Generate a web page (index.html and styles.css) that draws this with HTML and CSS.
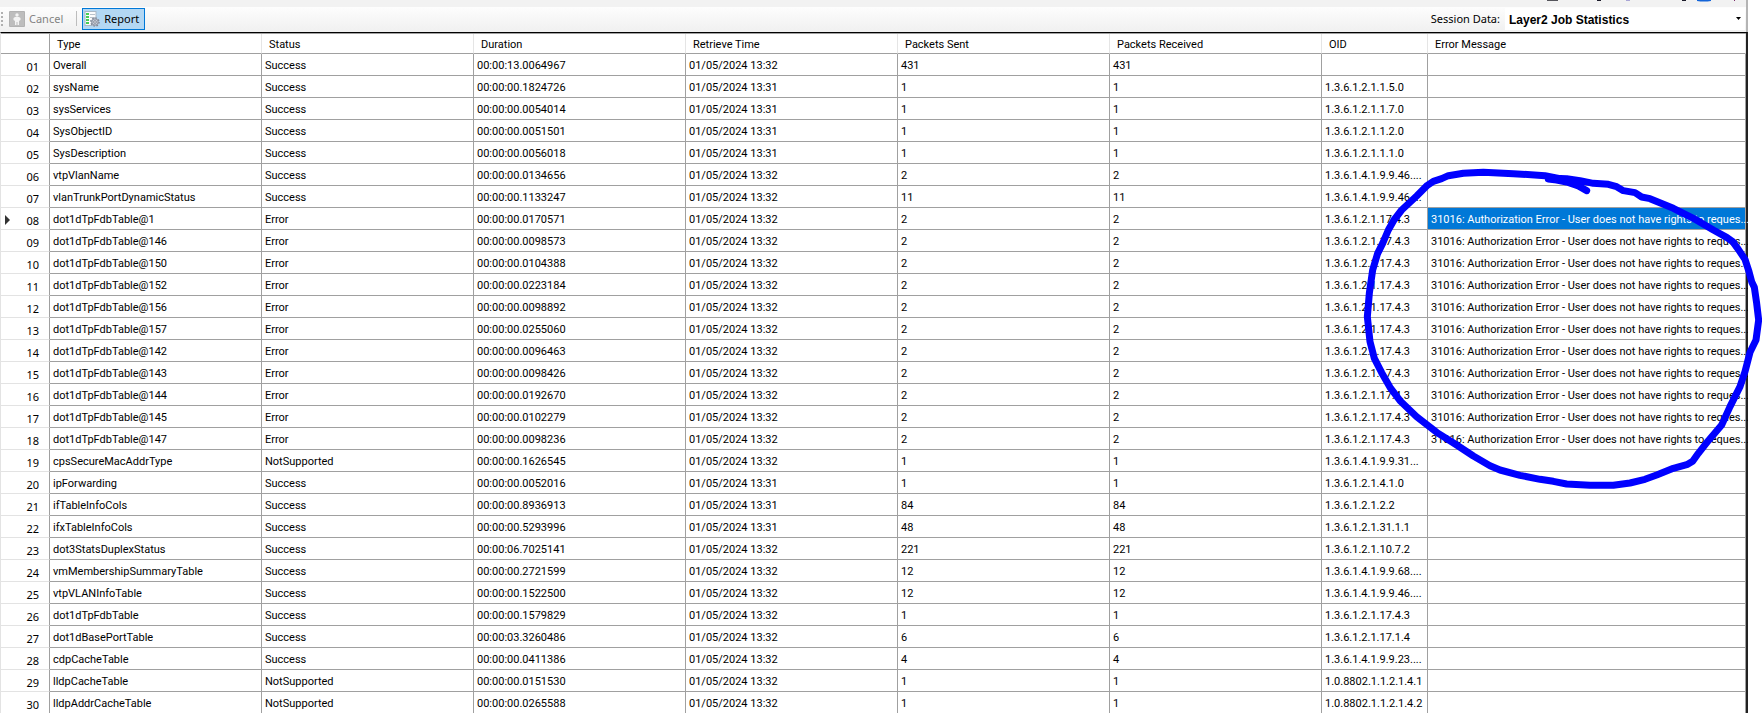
FILE: index.html
```
<!DOCTYPE html>
<html lang="en">
<head>
<meta charset="utf-8">
<title>Layer2 Job Statistics</title>
<link rel="stylesheet" href="styles.css">
</head>
<body>
<div class="window">
  <div class="menu-strip">
    <svg class="menu-icons" width="200" height="2" viewBox="0 0 200 2" aria-hidden="true">
      <path fill="#55555c" d="M1 0h11v1H1z"/>
      <path fill="#1b1b2a" d="M51 0h4v1h-4z"/>
      <path fill="#a9a5d6" d="M80 0h4v1h-4z"/>
      <path fill="#1b1b2a" d="M136 0h4v1h-4z"/>
      <path fill="#1464d8" d="M151 0h14v1q-7 1-14 0z"/>
      <path fill="#7a2a6a" d="M188 0h1v1h-1z"/>
    </svg>
  </div>
  <div class="toolbar">
    <span class="grip" aria-hidden="true"></span>
    <button class="tool" type="button" disabled>
      <svg width="16" height="16" viewBox="0 0 16 16" aria-hidden="true">
        <rect width="16" height="16" rx="1" fill="#b2b2b2"/>
        <rect x="1" y="1" width="14" height="14" fill="#bdbdbd"/>
        <circle cx="8" cy="4" r="1.7" fill="#f3f3f3"/>
        <path fill="#f3f3f3" d="M6 6h4l1.500 1v2l-1.500 1v4H8.500v-3h-1v3H6v-4L4.500 9V7z"/>
      </svg>
      <span>Cancel</span>
    </button>
    <span class="divider" aria-hidden="true"></span>
    <button class="tool active" type="button">
      <svg width="16" height="16" viewBox="0 0 16 16" aria-hidden="true">
        <rect x="1" y=".5" width="11" height="14" fill="#fbfcfd" stroke="#a9b8c6"/>
        <path fill="#46cf55" d="M2 2h3v2H2zM2 5h3v2H2zM2 8h3v2H2zM2 11h3v2H2z"/>
        <path fill="#b9c2cc" d="M6 3h5v1H6zM6 6h5v1H6zM6 9h2v1H6z"/>
        <circle cx="11" cy="11" r="4" fill="#c5cad3" stroke="#7f8796" stroke-width="1.500" stroke-dasharray="1.600 1.500"/>
        <circle cx="11" cy="11" r="3.200" fill="#c9ced8" stroke="#8b93a3"/>
        <circle cx="11" cy="11" r="1.300" fill="#fff" stroke="#7f8796"/>
      </svg>
      <span>Report</span>
    </button>
    <label class="session-label" for="session">Session Data:</label>
    <span class="combo">
      <select id="session"><option>Layer2 Job Statistics</option></select>
      <svg class="combo-arrow" width="5" height="3" viewBox="0 0 5 3" aria-hidden="true"><path d="M0 0h5L2.500 3z"/></svg>
    </span>
  </div>
  <div class="grid-frame">
    <table class="grid">
      <colgroup>
        <col class="c-num"><col class="c-std"><col class="c-std"><col class="c-std"><col class="c-std"><col class="c-std"><col class="c-std"><col class="c-oid"><col>
      </colgroup>
      <thead>
        <tr><td></td><th>Type</th><th>Status</th><th>Duration</th><th>Retrieve Time</th><th>Packets Sent</th><th>Packets Received</th><th>OID</th><th>Error Message</th></tr>
      </thead>
      <tbody id="rows"></tbody>
    </table>
  </div>
</div>
<svg class="ink" width="422" height="350" viewBox="0 0 1266 1050" aria-hidden="true">
  <path d="M740 122L715 108 680 96 650 90 625 87 M625 84L680 86 720 92 760 100 805 103 830 110 850 122 885 128 905 141 930 146 1000 175 1060 205 1120 240 1160 262 1178 275 1195 298 1215 328 1227 365 1235 395 1243 412 1250 460 1256 510 1248 570 1230 607 1215 665 1200 710 1170 770 1145 825 1105 872 1075 910 1058 934 1043 943 1000 955 950 975 915 988 870 999 820 1006 750 1006 680 1002 640 994 600 988 540 976 480 960 450 947 400 918 350 885 290 847 230 800 180 752 150 712 125 668 103 625 90 575 82 500 88 430 98 360 113 310 128 280 145 240 162 210 185 180 230 138 262 106 280 94 305 86 325 77 370 70 430 67 520 71 615 77 660 86"/>
</svg>
<script src="rows.js"></script>
</body>
</html>
```
FILE: styles.css
```
* { box-sizing: border-box; }

body {
  margin: 0;
  background: #fff;
  color: #000;
  font: 11px/14px Roboto, "Liberation Sans", sans-serif;
}

.window {
  display: flex;
  flex-direction: column;
  height: 100vh;
  margin-right: 14px;
  overflow: hidden;
}

.menu-strip {
  display: flex;
  flex: none;
  justify-content: flex-end;
  height: 7px;
  border-right: 2px solid #b4b4b4;
  background: #f2f2f2;
}

.menu-icons { flex: none; }

.toolbar {
  display: flex;
  flex: none;
  align-items: center;
  height: 25px;
  padding: 0 1px 2px;
  border-right: 2px solid #b4b4b4;
  background: linear-gradient(#fdfdfd, #f0f0f0);
  font-family: "Noto Sans", "Open Sans", sans-serif;
}

.grip {
  width: 2px;
  height: 14px;
  background: repeating-linear-gradient(#b0b0b0 0 2px, transparent 2px 4px);
}

.tool {
  display: flex;
  align-items: center;
  gap: 4px;
  height: 22px;
  margin-left: 5px;
  padding: 0 4px 0 0;
  border: 1px solid transparent;
  background: none;
  color: #000;
  font: inherit;
}

.tool:disabled { color: #838383; }

.tool.active {
  padding: 0 5px 0 1px;
  border-color: #0078d7;
  background: #b3d7f3;
}

.divider {
  width: 1px;
  height: 15px;
  margin-left: 8px;
  background: #bdbdbd;
}

.session-label { margin-left: auto; }

.combo {
  display: grid;
  align-items: center;
  width: 240px;
  height: 22px;
  margin-left: 5px;
  background: #fff;
}

.combo select {
  grid-area: 1 / 1;
  height: 22px;
  padding: 2px 16px 0 4px;
  border: 0;
  appearance: none;
  background: none;
  color: #000;
  font: bold 12px "Liberation Sans", Arial, sans-serif;
}

.combo-arrow {
  grid-area: 1 / 1;
  justify-self: end;
  margin-right: 4px;
  pointer-events: none;
}

.grid-frame {
  flex: 1;
  min-height: 0;
  border: 1px solid #e3e3e3;
  border-top: 1px solid #000;
  border-right: 2px solid #222;
  border-bottom: 0;
}

.grid {
  width: 100%;
  table-layout: fixed;
  border-spacing: 0;
  border-top: 1px solid #a0a0a0;
}

.c-num { width: 49px; }
.c-std { width: 212px; }
.c-oid { width: 106px; }

.grid th,
.grid td {
  height: 22px;
  padding: 2px 0 0 3px;
  border-right: 1px solid #a0a0a0;
  border-bottom: 1px solid #a0a0a0;
  font-weight: 400;
  text-align: left;
  white-space: nowrap;
}

.grid thead th,
.grid thead td {
  height: 20px;
  padding-left: 7px;
  border-right-color: #e5e5e5;
}

.grid thead td:first-child { border-right-color: #a0a0a0; }

.grid tbody th {
  padding: 5px 10px 0 4px;
  border-bottom-color: #e3e3e3;
  font-family: "Noto Sans", "Open Sans", sans-serif;
}

.row-head {
  display: flex;
  align-items: center;
  justify-content: flex-end;
}

.row-head svg {
  margin: 0 auto 3px 0;
  fill: #333;
}

.grid td.selected {
  background: #0078d7;
  color: #fff;
}

.ink {
  position: absolute;
  top: 150px;
  right: 0;
  pointer-events: none;
}

.ink path {
  fill: none;
  stroke: #00f;
  stroke-width: 21px;
  stroke-linecap: round;
  stroke-linejoin: round;
}
```
FILE: rows.js
```
const FDB_OID = '1.3.6.1.2.1.17.4.3';
const AUTH_ERROR = '31016: Authorization Error - User does not have rights to reques...';

// type, status, duration, minute, packets, OID
const jobs = [
  ['Overall', 'Success', '00:00:13.0064967', 32, 431, ''],
  ['sysName', 'Success', '00:00:00.1824726', 31, 1, '1.3.6.1.2.1.1.5.0'],
  ['sysServices', 'Success', '00:00:00.0054014', 31, 1, '1.3.6.1.2.1.1.7.0'],
  ['SysObjectID', 'Success', '00:00:00.0051501', 31, 1, '1.3.6.1.2.1.1.2.0'],
  ['SysDescription', 'Success', '00:00:00.0056018', 31, 1, '1.3.6.1.2.1.1.1.0'],
  ['vtpVlanName', 'Success', '00:00:00.0134656', 32, 2, '1.3.6.1.4.1.9.9.46....'],
  ['vlanTrunkPortDynamicStatus', 'Success', '00:00:00.1133247', 32, 11, '1.3.6.1.4.1.9.9.46....'],
  ['dot1dTpFdbTable@1', 'Error', '00:00:00.0170571', 32, 2, FDB_OID],
  ['dot1dTpFdbTable@146', 'Error', '00:00:00.0098573', 32, 2, FDB_OID],
  ['dot1dTpFdbTable@150', 'Error', '00:00:00.0104388', 32, 2, FDB_OID],
  ['dot1dTpFdbTable@152', 'Error', '00:00:00.0223184', 32, 2, FDB_OID],
  ['dot1dTpFdbTable@156', 'Error', '00:00:00.0098892', 32, 2, FDB_OID],
  ['dot1dTpFdbTable@157', 'Error', '00:00:00.0255060', 32, 2, FDB_OID],
  ['dot1dTpFdbTable@142', 'Error', '00:00:00.0096463', 32, 2, FDB_OID],
  ['dot1dTpFdbTable@143', 'Error', '00:00:00.0098426', 32, 2, FDB_OID],
  ['dot1dTpFdbTable@144', 'Error', '00:00:00.0192670', 32, 2, FDB_OID],
  ['dot1dTpFdbTable@145', 'Error', '00:00:00.0102279', 32, 2, FDB_OID],
  ['dot1dTpFdbTable@147', 'Error', '00:00:00.0098236', 32, 2, FDB_OID],
  ['cpsSecureMacAddrType', 'NotSupported', '00:00:00.1626545', 32, 1, '1.3.6.1.4.1.9.9.31...'],
  ['ipForwarding', 'Success', '00:00:00.0052016', 31, 1, '1.3.6.1.2.1.4.1.0'],
  ['ifTableInfoCols', 'Success', '00:00:00.8936913', 31, 84, '1.3.6.1.2.1.2.2'],
  ['ifxTableInfoCols', 'Success', '00:00:00.5293996', 31, 48, '1.3.6.1.2.1.31.1.1'],
  ['dot3StatsDuplexStatus', 'Success', '00:00:06.7025141', 32, 221, '1.3.6.1.2.1.10.7.2'],
  ['vmMembershipSummaryTable', 'Success', '00:00:00.2721599', 32, 12, '1.3.6.1.4.1.9.9.68....'],
  ['vtpVLANInfoTable', 'Success', '00:00:00.1522500', 32, 12, '1.3.6.1.4.1.9.9.46....'],
  ['dot1dTpFdbTable', 'Success', '00:00:00.1579829', 32, 1, FDB_OID],
  ['dot1dBasePortTable', 'Success', '00:00:03.3260486', 32, 6, '1.3.6.1.2.1.17.1.4'],
  ['cdpCacheTable', 'Success', '00:00:00.0411386', 32, 4, '1.3.6.1.4.1.9.9.23....'],
  ['lldpCacheTable', 'NotSupported', '00:00:00.0151530', 32, 1, '1.0.8802.1.1.2.1.4.1'],
  ['lldpAddrCacheTable', 'NotSupported', '00:00:00.0265588', 32, 1, '1.0.8802.1.1.2.1.4.2']
];

const current = 7;
const marker = '<svg width="5" height="10" viewBox="0 0 5 10" aria-hidden="true"><path d="M0 0l5 5-5 5z"/></svg>';

document.getElementById('rows').innerHTML = jobs.map(([type, status, duration, minute, packets, oid], i) => {
  const cells = [type, status, duration, `01/05/2024 13:${minute}`, packets, packets, oid]
    .map(value => `<td>${value}</td>`).join('');
  const head = `${i === current ? marker : ''}${String(i + 1).padStart(2, '0')}`;
  const message = status === 'Error' ? AUTH_ERROR : '';
  return `<tr><th scope="row"><div class="row-head">${head}</div></th>${cells}<td${i === current ? ' class="selected"' : ''}>${message}</td></tr>`;
}).join('');
```
